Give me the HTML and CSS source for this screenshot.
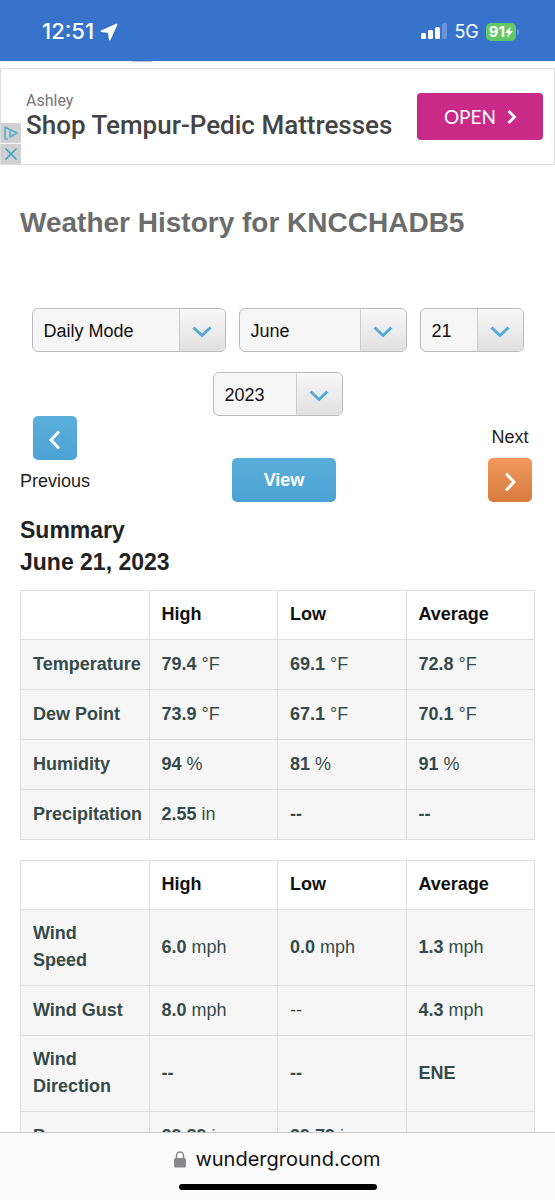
FILE: index.html
```
<!DOCTYPE html>
<html lang="en">
<head>
    <meta charset="UTF-8">
    <meta name="viewport" content="width=device-width, initial-scale=1.0">
    <title>Weather History for KNCCHADB5</title>
    <link rel="stylesheet" href="styles.css">
</head>
<body>

    <header class="status-bar">
        <div class="status-left">
            <span class="clock">12:51</span>
            <svg width="18" height="18" viewBox="0 0 18 18"><path d="M16.500 1.500 1.500 8.200l7.300.9 1 7.400z" fill="#fff" stroke="#fff" stroke-width="1.800" stroke-linejoin="round"/></svg>
        </div>
        <div class="status-right">
            <svg width="26" height="17" viewBox="0 0 26 17">
                <rect x="0" y="10" width="5" height="6" rx="1.500" fill="#fff"/>
                <rect x="7" y="7" width="5" height="9" rx="1.500" fill="#fff"/>
                <rect x="14" y="4" width="5" height="12" rx="1.500" fill="#fff"/>
                <rect x="21" y="0" width="5" height="16" rx="1.500" fill="#6794da"/>
            </svg>
            <span class="network">5G</span>
            <span class="battery">91<svg width="8" height="12" viewBox="0 0 9 13"><path d="M6.500 0 0 7.500h3.600L2.300 13 9 5.300H5.300z" fill="#fff"/></svg></span>
            <span class="battery-tip"></span>
        </div>
        <span class="page-logo"></span>
    </header>

    <main class="page">
        <section class="ad">
            <div class="ad-controls">
                <button class="ad-control" aria-label="Ad choices">
                    <svg width="16" height="16" viewBox="0 0 16 16" fill="none" stroke="#5bb0c9" stroke-width="1.600" stroke-linejoin="round"><path d="M5 14H2V2l12 6-7 4V5.500"/></svg>
                </button>
                <button class="ad-control" aria-label="Close ad">
                    <svg width="16" height="16" viewBox="0 0 16 16" fill="none" stroke="#38a3c5" stroke-width="1.600"><path d="M2.500 2.500l11 11M13.500 2.500l-11 11"/></svg>
                </button>
            </div>
            <div class="ad-text">
                <span class="ad-brand">Ashley</span>
                <span class="ad-title">Shop Tempur-Pedic Mattresses</span>
            </div>
            <a class="ad-open" href="#">OPEN
                <svg width="10" height="16" viewBox="0 0 10 16" fill="none" stroke="#fff" stroke-width="2.800"><path d="M1.500 2 7.500 8l-6 6"/></svg>
            </a>
        </section>

        <h1>Weather History for KNCCHADB5</h1>

        <form class="history-form">
            <div class="selects">
                <div class="select-box mode">
                    <select aria-label="Mode"><option>Daily Mode</option></select>
                    <span class="arrow"><svg width="20" height="12" viewBox="0 0 20 12"><path d="M1.500 1.500 10 9.500l8.500-8"/></svg></span>
                </div>
                <div class="select-box month">
                    <select aria-label="Month"><option>June</option></select>
                    <span class="arrow"><svg width="20" height="12" viewBox="0 0 20 12"><path d="M1.500 1.500 10 9.500l8.500-8"/></svg></span>
                </div>
                <div class="select-box day">
                    <select aria-label="Day"><option>21</option></select>
                    <span class="arrow"><svg width="20" height="12" viewBox="0 0 20 12"><path d="M1.500 1.500 10 9.500l8.500-8"/></svg></span>
                </div>
                <div class="select-box year">
                    <select aria-label="Year"><option>2023</option></select>
                    <span class="arrow"><svg width="20" height="12" viewBox="0 0 20 12"><path d="M1.500 1.500 10 9.500l8.500-8"/></svg></span>
                </div>
            </div>
            <div class="pager">
                <div class="pager-item">
                    <button type="button" class="btn btn-prev" aria-labelledby="prev-label"><svg width="12" height="20" viewBox="0 0 12 20"><path d="M10 1.500 2 10l8 8.500"/></svg></button>
                    <span id="prev-label">Previous</span>
                </div>
                <button type="button" class="btn btn-view">View</button>
                <div class="pager-item next">
                    <span id="next-label">Next</span>
                    <button type="button" class="btn btn-next" aria-labelledby="next-label"><svg width="12" height="20" viewBox="0 0 12 20"><path d="M2 1.500 10 10l-8 8.500"/></svg></button>
                </div>
            </div>
        </form>

        <h2>Summary<br>June 21, 2023</h2>

        <table>
            <thead>
                <tr><th></th><th>High</th><th>Low</th><th>Average</th></tr>
            </thead>
            <tbody>
                <tr><th>Temperature</th><td><b>79.4</b> °F</td><td><b>69.1</b> °F</td><td><b>72.8</b> °F</td></tr>
                <tr><th>Dew Point</th><td><b>73.9</b> °F</td><td><b>67.1</b> °F</td><td><b>70.1</b> °F</td></tr>
                <tr><th>Humidity</th><td><b>94</b> %</td><td><b>81</b> %</td><td><b>91</b> %</td></tr>
                <tr><th>Precipitation</th><td><b>2.55</b> in</td><td><b>--</b></td><td><b>--</b></td></tr>
            </tbody>
        </table>

        <table>
            <thead>
                <tr><th></th><th>High</th><th>Low</th><th>Average</th></tr>
            </thead>
            <tbody>
                <tr><th>Wind Speed</th><td><b>6.0</b> mph</td><td><b>0.0</b> mph</td><td><b>1.3</b> mph</td></tr>
                <tr><th>Wind Gust</th><td><b>8.0</b> mph</td><td>--</td><td><b>4.3</b> mph</td></tr>
                <tr><th>Wind Direction</th><td><b>--</b></td><td><b>--</b></td><td><b>ENE</b></td></tr>
                <tr><th>Pressure</th><td><b>29.89</b> in</td><td><b>29.79</b> in</td><td></td></tr>
            </tbody>
        </table>
    </main>

    <footer class="browser-bar">
        <div class="address">
            <svg width="12" height="17" viewBox="0 0 12 17"><path d="M2.500 8V4.500a3.500 3.500 0 0 1 7 0V8" fill="none" stroke="#88888c" stroke-width="1.500"/><rect x="0" y="7" width="12" height="9.500" rx="1.500" fill="#88888c"/></svg>
            <span>wunderground.com</span>
        </div>
        <div class="home-indicator"></div>
    </footer>

</body>
</html>
```
FILE: styles.css
```
* {
    box-sizing: border-box;
}

body {
    font-family: "Liberation Sans", Arial, sans-serif;
    font-size: 18px;
    margin: 0;
    height: 100vh;
    display: flex;
    flex-direction: column;
    background: #fff;
    color: #222;
}

button,
select {
    font: inherit;
}

/* Status bar */
.status-bar {
    position: relative;
    display: flex;
    flex-shrink: 0;
    justify-content: space-between;
    align-items: center;
    padding: 18px 36px 16px 42px;
    background: #3873cb;
    color: #fff;
    font-family: Inter, sans-serif;
}

.status-left,
.status-right {
    display: flex;
    align-items: center;
}

.status-left {
    gap: 6px;
}

.clock {
    font-size: 22px;
    line-height: 27px;
    font-weight: 500;
}

.status-right {
    gap: 7px;
}

.network {
    font-size: 18px;
}

.battery {
    display: flex;
    align-items: center;
    padding: 0 3px;
    background: #62c966;
    border-radius: 5px;
    font-size: 15px;
    line-height: 18px;
    font-weight: 700;
}

.battery-tip {
    width: 2px;
    height: 6px;
    margin-left: -6px;
    border-radius: 0 2px 2px 0;
    background: #6794da;
}

/* bottom edge of the site logo */
.page-logo {
    position: absolute;
    left: 132px;
    top: 100%;
    width: 20px;
    height: 1px;
    border-radius: 0 0 10px 10px;
    background: #b4bfe0;
}

/* Page content */
.page {
    flex: 1;
    min-height: 0;
    overflow: hidden;
}

.ad {
    display: flex;
    align-items: center;
    margin-top: 7px;
    height: 97px;
    border: 1px solid #ddd;
    padding-right: 11px;
}

.ad-controls {
    display: flex;
    flex-direction: column;
    align-self: flex-end;
    gap: 1px;
}

.ad-control {
    display: flex;
    align-items: center;
    justify-content: center;
    width: 20px;
    height: 20px;
    padding: 0;
    border: none;
    background: #d0d0d0;
}

.ad-text {
    display: flex;
    flex-direction: column;
    flex: 1;
    padding: 0 0 3px 5px;
    white-space: nowrap;
    font-family: Roboto, sans-serif;
}

.ad-brand {
    font-size: 16px;
    line-height: 20px;
    color: #777;
}

.ad-title {
    font-size: 26px;
    line-height: 28px;
    font-weight: 500;
    color: #444;
}

.ad-open {
    display: flex;
    align-items: center;
    gap: 11px;
    padding: 0 26px 0 27px;
    border-radius: 4px;
    background: #c92a87;
    color: #fff;
    font-family: Lato, sans-serif;
    font-size: 19px;
    line-height: 47px;
    text-decoration: none;
}

h1 {
    margin: 40px 20px 0;
    font-size: 28px;
    line-height: 36px;
    color: #6c6c6c;
}

/* Date form */
.history-form {
    padding: 67px 23px 0 20px;
}

.selects {
    display: flex;
    flex-wrap: wrap;
    justify-content: center;
    gap: 20px 13px;
    padding-left: 3px;
}

.select-box {
    display: flex;
    height: 44px;
    border: 1px solid #bbb;
    border-radius: 6px;
    background: #f6f6f6;
    overflow: hidden;
}

.mode {
    width: 194px;
}

.month {
    width: 168px;
}

.day {
    width: 104px;
}

.year {
    width: 130px;
}

.select-box select {
    flex: 1;
    min-width: 0;
    padding: 2px 0 0 11px;
    border: none;
    appearance: none;
    background: transparent;
    color: #111;
}

.arrow {
    display: flex;
    align-items: center;
    justify-content: center;
    width: 46px;
    padding-top: 4px;
    border-left: 1px solid #ccc;
    background: linear-gradient(#f8f8f8, #e0e0e0);
}

.arrow path {
    fill: none;
    stroke: #54aad8;
    stroke-width: 3;
}

.pager {
    display: flex;
    justify-content: space-between;
    align-items: flex-end;
}

.pager-item {
    display: flex;
    flex-direction: column;
    align-items: center;
    align-self: flex-start;
    line-height: 42px;
}

.pager-item.next {
    align-self: flex-end;
    padding-left: 10px;
}

.btn {
    display: flex;
    align-items: center;
    justify-content: center;
    width: 44px;
    height: 44px;
    padding: 3px 0 0;
    border: none;
    border-radius: 5px;
    background: linear-gradient(#5bafdb, #4ba3d4);
    color: #fff;
    cursor: pointer;
}

.btn path {
    fill: none;
    stroke: #fff;
    stroke-width: 3;
}

.btn-view {
    width: 104px;
    padding: 0;
    font-weight: bold;
}

.btn-next {
    background: linear-gradient(#f0985a, #d67c3f);
}

h2 {
    margin: 12px 20px;
    font-size: 23px;
    line-height: 32px;
    color: #222;
}

/* Summary tables */
table {
    width: calc(100% - 40px);
    margin: 0 20px 20px;
    border-collapse: collapse;
    table-layout: fixed;
    line-height: 27px;
}

th,
td {
    height: 50px;
    padding: 10px 0 11px 12px;
    border: 1px solid #dedede;
    text-align: left;
}

thead th {
    height: 49px;
    color: #111;
}

tbody tr {
    background: #f6f6f6;
    color: #354a4a;
}

tbody th {
    padding-right: 16px;
}

/* Browser address bar */
.browser-bar {
    flex-shrink: 0;
    padding: 12px 0 10px;
    border-top: 1px solid #c8c8c8;
    background: #fcfcfc;
    font-family: Inter, sans-serif;
    font-size: 20px;
    line-height: 28px;
    color: #111;
}

.address {
    display: flex;
    align-items: center;
    justify-content: center;
    gap: 9px;
}

.home-indicator {
    width: 198px;
    height: 6px;
    margin: 11px auto 0;
    border-radius: 3px;
    background: #000;
}
```
